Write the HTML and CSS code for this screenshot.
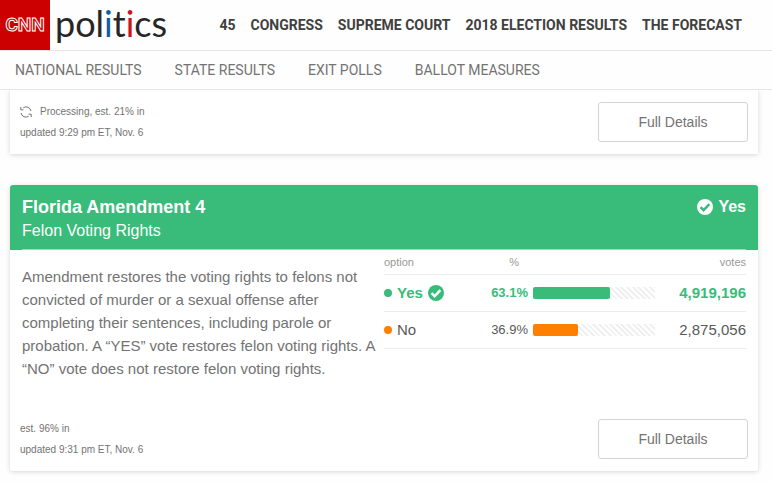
FILE: index.html
```html
<!DOCTYPE html>
<html lang="en">
<head>
    <meta charset="UTF-8">
    <meta name="viewport" content="width=device-width, initial-scale=1.0">
    <title>Ballot Measures - CNN Politics</title>
    <link rel="stylesheet" href="styles.css">
</head>
<body>
<header class="site-header">
    <a class="brand" href="#">
        <span class="brand-box">CNN</span>
        <span class="brand-name">pol<span class="blue">i</span>t<span class="red">i</span>cs</span>
    </a>
    <nav class="main-nav">
        <a href="#">45</a>
        <a href="#">CONGRESS</a>
        <a href="#">SUPREME COURT</a>
        <a href="#">2018 ELECTION RESULTS</a>
        <a href="#">THE FORECAST</a>
    </nav>
</header>
<nav class="sub-nav">
    <a href="#">NATIONAL RESULTS</a>
    <a href="#">STATE RESULTS</a>
    <a href="#">EXIT POLLS</a>
    <a href="#">BALLOT MEASURES</a>
</nav>

<main class="cards">
    <section class="card card-cut">
        <div class="card-footer">
            <div class="status">
                <div class="status-line">
                    <svg class="refresh" viewBox="0 0 12 12" width="12" height="12" fill="none" stroke="#737373">
                        <path d="M3.2 1.8A5 5 0 0 1 11 5M8.8 10.2A5 5 0 0 1 1 7"/>
                        <path d="M.8 1v2.8h2.6M11.2 11V8.2H8.6"/>
                    </svg>
                    <span>Processing, est. 21% in</span>
                </div>
                <div class="status-line">updated 9:29 pm ET, Nov. 6</div>
            </div>
            <button type="button" class="details-btn">Full Details</button>
        </div>
    </section>

    <section class="card">
        <div class="card-header">
            <div class="card-header-inner">
                <div>
                    <h2>Florida Amendment 4</h2>
                    <p class="subtitle">Felon Voting Rights</p>
                </div>
                <div class="outcome">
                    <svg viewBox="0 0 16 16" width="16" height="16">
                        <circle cx="8" cy="8" r="8" fill="#fff"/>
                        <path d="M3.6 8.2l3 3 5.8-6" fill="none" stroke="#39bb7a" stroke-width="2.4"/>
                    </svg>
                    <span>Yes</span>
                </div>
            </div>
        </div>
        <div class="card-body">
            <p class="description">Amendment restores the voting rights to felons not convicted of murder or a sexual offense after completing their sentences, including parole or probation. A “YES” vote restores felon voting rights. A “NO” vote does not restore felon voting rights.</p>
            <table class="results">
                <thead>
                    <tr>
                        <th class="col-option">option</th>
                        <th class="col-pct">%</th>
                        <th class="col-bar"></th>
                        <th class="col-votes">votes</th>
                    </tr>
                </thead>
                <tbody>
                    <tr class="winner">
                        <td class="col-option">
                            <div class="option">
                                <span class="dot"></span>
                                <span>Yes</span>
                                <svg viewBox="0 0 16 16" width="16" height="16">
                                    <circle cx="8" cy="8" r="8" fill="#39bb7a"/>
                                    <path d="M3.6 8.2l3 3 5.8-6" fill="none" stroke="#fff" stroke-width="2.4"/>
                                </svg>
                            </div>
                        </td>
                        <td class="col-pct">63.1%</td>
                        <td class="col-bar"><div class="bar"><div class="bar-fill" style="width: 63.1%"></div></div></td>
                        <td class="col-votes">4,919,196</td>
                    </tr>
                    <tr class="loser">
                        <td class="col-option">
                            <div class="option">
                                <span class="dot"></span>
                                <span>No</span>
                            </div>
                        </td>
                        <td class="col-pct">36.9%</td>
                        <td class="col-bar"><div class="bar"><div class="bar-fill" style="width: 36.9%"></div></div></td>
                        <td class="col-votes">2,875,056</td>
                    </tr>
                </tbody>
            </table>
        </div>
        <div class="card-footer">
            <div class="status">
                <div class="status-line">est. 96% in</div>
                <div class="status-line">updated 9:31 pm ET, Nov. 6</div>
            </div>
            <button type="button" class="details-btn">Full Details</button>
        </div>
    </section>
</main>
</body>
</html>
```
FILE: styles.css
```css
* {
    box-sizing: border-box;
}
body {
    margin: 0;
    background: #fefefe;
    color: #737373;
    font-family: "Liberation Sans", Arial, sans-serif;
}
a {
    color: inherit;
    text-decoration: none;
}
h2, p {
    margin: 0;
}

/* header */
.site-header {
    display: flex;
    justify-content: space-between;
    height: 51px;
    padding-right: 30px;
    border-bottom: 1px solid #e6e6e6;
}
.brand {
    display: flex;
    gap: 5px;
}
.brand-box {
    width: 50px;
    height: 50px;
    background: #cc0000;
    color: #cc0000;
    font: 700 19px/50px Roboto, sans-serif;
    text-align: center;
    -webkit-text-stroke: 1px #fff;
}
.brand-name {
    color: #262626;
    font: 400 36px/46px Lato, sans-serif;
    font-variant-ligatures: none;
}
.blue {
    color: #0f5ca8;
}
.red {
    color: #cc1420;
}
.main-nav, .sub-nav {
    display: flex;
    align-items: center;
    font-family: Roboto, sans-serif;
    font-size: 14px;
    white-space: nowrap;
}
.main-nav {
    gap: 15px;
    color: #404040;
    font-weight: 700;
}
.sub-nav {
    gap: 33px;
    height: 39px;
    padding: 0 15px;
    border-bottom: 1px solid #e6e6e6;
}

/* cards */
.cards {
    padding: 0 14px 11px 10px;
}
.card {
    background: #fff;
    border-radius: 3px;
    box-shadow: 0 1px 5px rgba(0, 0, 0, 0.16);
    overflow: hidden;
}
.card-cut {
    margin-bottom: 31px;
    padding-top: 11px;
    border-radius: 0;
    clip-path: inset(0 -8px -8px -8px);
}
.card-header {
    padding: 0 12px;
    background: #39bb7a;
    color: #fff;
}
.card-header-inner {
    display: flex;
    justify-content: space-between;
    height: 65px;
    padding-top: 10px;
    border-bottom: 1px solid #9cddbc;
}
.card-header h2 {
    font-size: 18px;
    line-height: 24px;
}
.subtitle {
    font-size: 16px;
    line-height: 24px;
}
.outcome {
    display: flex;
    align-items: center;
    gap: 5px;
    height: 24px;
    font-size: 16px;
    font-weight: 700;
}
.card-body {
    display: grid;
    grid-template-columns: 356px 1fr;
    gap: 6px;
    align-items: start;
    min-height: 168px;
    padding: 0 12px;
}
.description {
    padding-top: 15px;
    font-size: 15px;
    line-height: 23px;
}
.results {
    width: 100%;
    border-collapse: collapse;
    table-layout: fixed;
}
.results th, .results td {
    padding: 0;
    border-bottom: 1px solid #ececec;
}
.results th {
    height: 24px;
    color: #999;
    font-size: 11px;
    font-weight: 400;
    text-align: left;
}
.results td {
    height: 37px;
    font-size: 15px;
}
.col-option {
    width: 92px;
}
.results .col-pct {
    width: 57px;
    padding-right: 5px;
    text-align: right;
}
.results td.col-pct {
    font-size: 13px;
}
.results th.col-pct {
    padding-right: 14px;
}
.col-bar {
    width: 122px;
}
.results .col-votes {
    text-align: right;
}
.option {
    display: flex;
    align-items: center;
    gap: 5px;
}
.dot {
    width: 8px;
    height: 8px;
    border-radius: 50%;
}
.bar {
    height: 12px;
    background: repeating-linear-gradient(45deg, #fff 0 2px, #f0f0f0 2px 4px);
}
.bar-fill {
    height: 12px;
    border-radius: 2px;
}
.winner {
    color: #39bb7a;
    font-weight: 700;
}
.winner .dot, .winner .bar-fill {
    background: #39bb7a;
}
.loser {
    color: #595959;
}
.loser .dot, .loser .bar-fill {
    background: #ff7f00;
}

/* card footer */
.card-footer {
    display: flex;
    justify-content: space-between;
    align-items: center;
    padding: 0 10px 11px;
}
.status-line {
    display: flex;
    align-items: center;
    gap: 8px;
    font-size: 10px;
    line-height: 21px;
}
.details-btn {
    width: 150px;
    height: 40px;
    background: #fff;
    border: 1px solid #d4d4d4;
    border-radius: 3px;
    color: #737373;
    font-family: inherit;
    font-size: 14px;
    cursor: pointer;
}
```
